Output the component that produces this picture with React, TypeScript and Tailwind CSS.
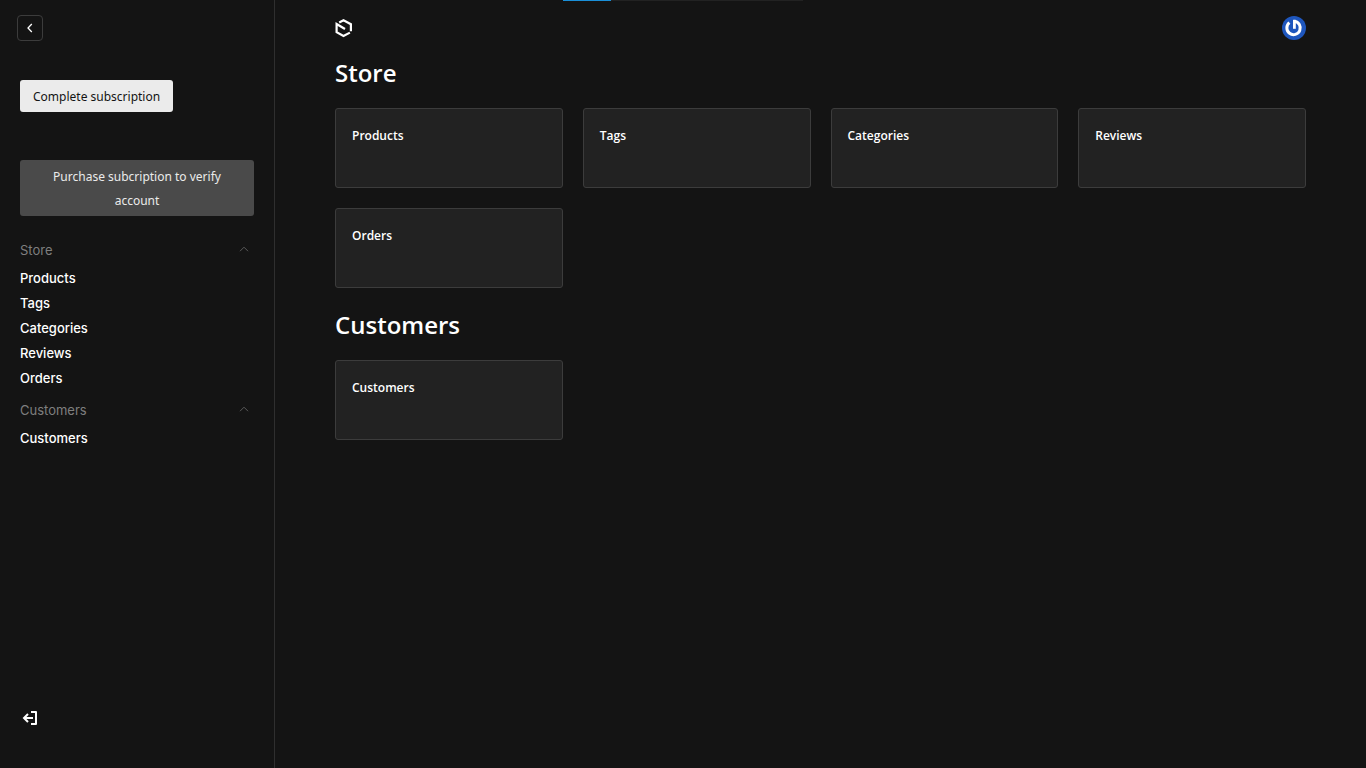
const groups = [
  {
    label: "Store",
    items: ["Products", "Tags", "Categories", "Reviews", "Orders"],
  },
  {
    label: "Customers",
    items: ["Customers"],
  },
];

const Logo = () => (
  <svg width="18" height="20" viewBox="0 0 18 20" fill="none" stroke="#fff" strokeWidth="2.2">
    <path d="M4.2 4.5 8.5 2.2 15.9 6.2V13.2" />
    <path d="M14.9 14.6 8.5 18 1.6 14.2V6L10 11" />
  </svg>
);

const Avatar = () => (
  <svg width="24" height="24" viewBox="0 0 24 24" fill="none">
    <circle cx="12" cy="12" r="12" fill="#1e56bd" />
    <path d="M7.4 6.7A6.7 6.7 0 1 0 12.4 5.3" stroke="#fff" strokeWidth="3" />
    <path d="M12.4 3.8v9" stroke="#fff" strokeWidth="2.8" />
  </svg>
);

const LogoutIcon = () => (
  <svg width="20" height="20" viewBox="0 0 20 20" fill="none" stroke="#fff" strokeWidth="2">
    <path d="M11 4h5v12h-5" strokeLinejoin="round" />
    <path d="M13 10H4M8 6l-4 4 4 4" />
  </svg>
);

const Sidebar = () => {
  return (
    <aside className="flex w-[275px] shrink-0 flex-col border-r border-[#2f2f2f] px-5 pb-10">
      <button
        type="button"
        aria-label="Close menu"
        className="-ml-[3px] mt-[15px] flex size-[26px] items-center justify-center rounded border border-[#3c3c3c]"
      >
        <svg width="10" height="10" viewBox="0 0 10 10" fill="none" stroke="#fff" strokeWidth="1.3">
          <path d="M6.8 1 3 5l3.8 4" />
        </svg>
      </button>
      <button
        type="button"
        className="mt-[39px] self-start rounded-[3px] bg-[#ebebeb] px-[13px] pb-[3px] pt-[5px] font-['Noto_Sans',sans-serif] text-xs leading-6 text-[#141414]"
      >
        Complete subscription
      </button>
      <button
        type="button"
        className="mt-12 rounded-[3px] bg-[#4a4a4a] px-7 pb-[3px] pt-[5px] text-center font-['Noto_Sans',sans-serif] text-xs leading-6 text-[#ebebeb]"
      >
        Purchase subcription to verify account
      </button>
      <nav className="mt-6 flex flex-col gap-[9px] font-['Inter',sans-serif] text-[13px]">
        {groups.map((group) => (
          <div key={group.label}>
            <button
              type="button"
              className="mb-1.5 flex w-full items-center justify-between pr-[5px] leading-5 text-[#7f7f7f]"
            >
              {group.label}
              <svg width="10" height="10" viewBox="0 0 10 10" fill="none" stroke="#5a5a5a">
                <path d="M1 6.2 5 2.2l4 4" />
              </svg>
            </button>
            <ul>
              {group.items.map((item) => (
                <li key={item}>
                  <a href="#" className="block font-medium leading-[25px] text-white">
                    {item}
                  </a>
                </li>
              ))}
            </ul>
          </div>
        ))}
      </nav>
      <a href="#" aria-label="Log out" className="mt-auto self-start">
        <LogoutIcon />
      </a>
    </aside>
  );
};

const App = () => {
  return (
    <div className="relative flex min-h-screen bg-[#141414] font-['Open_Sans',sans-serif] text-white">
      <div className="absolute left-1/2 top-0 h-px w-60 -translate-x-1/2 bg-[#222]">
        <div className="h-px w-1/5 bg-[#1a8fd8]"></div>
      </div>
      <Sidebar />
      <div className="min-w-0 flex-1 px-[60px]">
        <header className="flex h-14 items-center justify-between">
          <a href="#" aria-label="Dashboard">
            <Logo />
          </a>
          <a href="#" aria-label="Account">
            <Avatar />
          </a>
        </header>
        <main className="flex flex-col gap-5">
          {groups.map((group) => (
            <section key={group.label} className="flex flex-col gap-[18px]">
              <h2 className="text-2xl font-semibold leading-[34px]">{group.label}</h2>
              <ul className="grid grid-cols-4 gap-5">
                {group.items.map((item) => (
                  <li key={item}>
                    <a
                      href="#"
                      className="block h-20 rounded-[3px] border border-[#3c3c3c] bg-[#222] p-4"
                    >
                      <h3 className="text-xs font-semibold leading-[22px]">{item}</h3>
                    </a>
                  </li>
                ))}
              </ul>
            </section>
          ))}
        </main>
      </div>
    </div>
  );
};

export default App;
